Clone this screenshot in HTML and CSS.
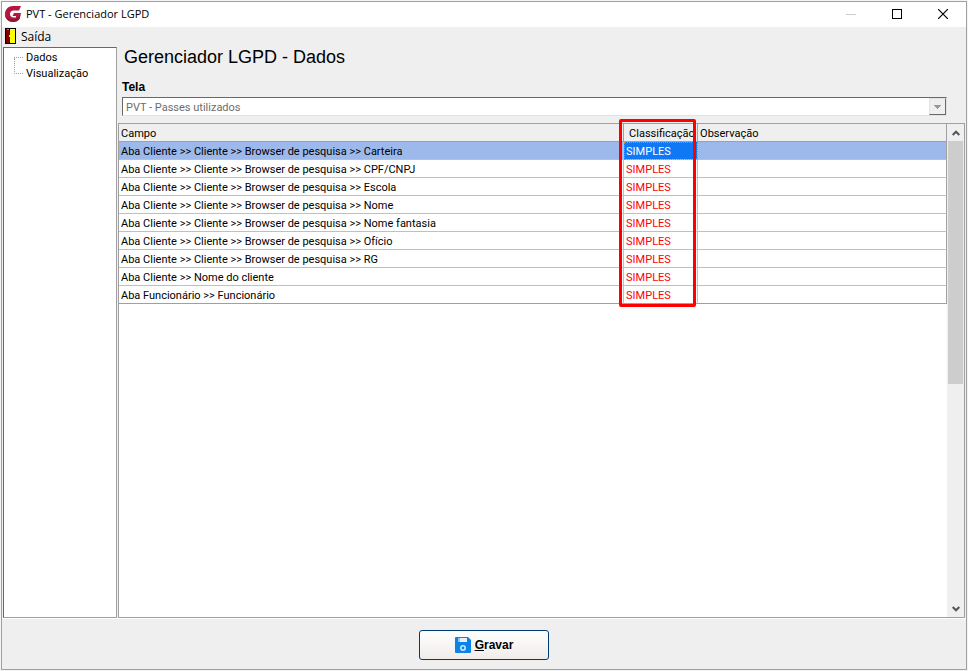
FILE: index.html
```html
<!DOCTYPE html>
<html lang="pt-BR">
	<head>
		<meta charset="UTF-8">
		<title>PVT - Gerenciador LGPD</title>
		<link rel="stylesheet" href="styles.css">
	</head>
	<body>
		<div class="window">
			<header class="titlebar">
				<svg class="logo" width="16" height="16" viewBox="0 0 16 16">
					<path d="M16 0L14 4.500H8.500C6.500 4.500 5 6 5 8S6.500 11.500 8.500 11.500H11V10H7.500L9 7H16L14.500 13C13 15 11 16 8 16C3.500 16 0 12.500 0 8S3.500 0 8 0Z" fill="#b5173f"/>
					<path d="M0 9C.5 13 4 16 8 16C11 16 13 15 14.500 13L15.500 9C12 14 4 15 0 9Z" fill="#8a1a3c"/>
				</svg>
				<span class="title">PVT - Gerenciador LGPD</span>
				<div class="controls">
					<button type="button" aria-label="Minimizar" disabled>
						<svg width="10" height="10" viewBox="0 0 10 10" shape-rendering="crispEdges"><path d="M0 5.500H10" stroke="#ccc"/></svg>
					</button>
					<button type="button" aria-label="Maximizar">
						<svg width="10" height="10" viewBox="0 0 10 10" shape-rendering="crispEdges"><path d="M.5 .5H9.500V9.500H.5Z" fill="none" stroke="#000"/></svg>
					</button>
					<button type="button" aria-label="Fechar">
						<svg width="10" height="10" viewBox="0 0 10 10"><path d="M0 0L10 10M10 0L0 10" stroke="#000" stroke-width="1.200"/></svg>
					</button>
				</div>
			</header>

			<nav class="menubar">
				<button type="button" class="menu-item">
					<svg width="11" height="16" viewBox="0 0 11 16" shape-rendering="crispEdges">
						<path d="M0 0H11V16H0Z" fill="#000"/>
						<path d="M5 1H10V15H5Z" fill="#ff0"/>
						<path d="M1 1L5 3V13L3 15H1Z" fill="#800000"/>
						<path d="M2 1H4V2H2Z" fill="#0cc"/>
						<path d="M4 7H5V9H4Z" fill="#ff0"/>
					</svg>
					Saída
				</button>
			</nav>

			<div class="content">
				<aside class="tree">
					<ul>
						<li><a href="#dados">Dados</a></li>
						<li><a href="#visualizacao">Visualização</a></li>
					</ul>
				</aside>

				<main class="main" id="dados">
					<h1>Gerenciador LGPD - Dados</h1>
					<div class="field">
						<label for="tela">Tela</label>
						<div class="combo">
							<select id="tela" disabled>
								<option>PVT - Passes utilizados</option>
							</select>
							<span class="combo-arrow">
								<svg width="7" height="4" viewBox="0 0 7 4" shape-rendering="crispEdges"><path d="M0 0H7L3.500 4Z" fill="#999"/></svg>
							</span>
						</div>
					</div>

					<div class="grid">
						<div class="grid-body">
							<table>
								<thead>
									<tr>
										<th class="col-campo">Campo</th>
										<th class="col-class">Classificação<span class="highlight"></span></th>
										<th>Observação</th>
									</tr>
								</thead>
								<tbody>
									<tr class="selected"><td>Aba Cliente &gt;&gt; Cliente &gt;&gt; Browser de pesquisa &gt;&gt; Carteira</td><td class="class focus">SIMPLES</td><td></td></tr>
									<tr><td>Aba Cliente &gt;&gt; Cliente &gt;&gt; Browser de pesquisa &gt;&gt; CPF/CNPJ</td><td class="class">SIMPLES</td><td></td></tr>
									<tr><td>Aba Cliente &gt;&gt; Cliente &gt;&gt; Browser de pesquisa &gt;&gt; Escola</td><td class="class">SIMPLES</td><td></td></tr>
									<tr><td>Aba Cliente &gt;&gt; Cliente &gt;&gt; Browser de pesquisa &gt;&gt; Nome</td><td class="class">SIMPLES</td><td></td></tr>
									<tr><td>Aba Cliente &gt;&gt; Cliente &gt;&gt; Browser de pesquisa &gt;&gt; Nome fantasia</td><td class="class">SIMPLES</td><td></td></tr>
									<tr><td>Aba Cliente &gt;&gt; Cliente &gt;&gt; Browser de pesquisa &gt;&gt; Ofício</td><td class="class">SIMPLES</td><td></td></tr>
									<tr><td>Aba Cliente &gt;&gt; Cliente &gt;&gt; Browser de pesquisa &gt;&gt; RG</td><td class="class">SIMPLES</td><td></td></tr>
									<tr><td>Aba Cliente &gt;&gt; Nome do cliente</td><td class="class">SIMPLES</td><td></td></tr>
									<tr><td>Aba Funcionário &gt;&gt; Funcionário</td><td class="class">SIMPLES</td><td></td></tr>
								</tbody>
							</table>
						</div>
						<div class="scrollbar">
							<button type="button" aria-label="Rolar para cima">
								<svg width="8" height="6" viewBox="0 0 8 6"><path d="M.7 5L4 1.700L7.300 5" fill="none" stroke="#555" stroke-width="2"/></svg>
							</button>
							<div class="track"><div class="thumb"></div></div>
							<button type="button" aria-label="Rolar para baixo">
								<svg width="8" height="6" viewBox="0 0 8 6"><path d="M.7 1L4 4.300L7.300 1" fill="none" stroke="#555" stroke-width="2"/></svg>
							</button>
						</div>
					</div>
				</main>
			</div>

			<footer class="footer">
				<button type="button" class="save">
					<svg width="16" height="16" viewBox="0 0 16 16">
						<path d="M0 1Q0 0 1 0H13L16 3V15Q16 16 15 16H1Q0 16 0 15Z" fill="#0a84e8"/>
						<path d="M3 1H12V5H3Z" fill="#e4f1fc"/>
						<path d="M3 1H5V5H3Z" fill="#8cc4f4"/>
						<circle cx="8" cy="11" r="2.200" fill="none" stroke="#d5eafc" stroke-width="1.500"/>
					</svg>
					<span><u>G</u>ravar</span>
				</button>
			</footer>
		</div>
	</body>
</html>
```

FILE: styles.css
```css
* {
	box-sizing: border-box;
	margin: 0;
	padding: 0;
}
body {
	background: #f4f4f4;
	padding: 1px;
	font-family: Roboto, "Liberation Sans", Arial, sans-serif;
	font-size: 11px;
	color: #000;
}
button {
	border: 0;
	background: none;
	font: inherit;
	color: inherit;
}
svg {
	display: block;
}
.window {
	display: flex;
	flex-direction: column;
	height: calc(100vh - 2px);
	border: 1px solid #a0a0a0;
	background: #efefef;
}

/* title bar */
.titlebar {
	display: flex;
	align-items: center;
	height: 25px;
	padding-left: 3px;
	gap: 5px;
	background: #fff;
	font-family: "Open Sans", "Noto Sans", sans-serif;
	font-size: 11px;
}
.title {
	line-height: 16px;
	padding-bottom: 2px;
}
.logo {
	margin-bottom: 2px;
}
.controls {
	display: flex;
	margin-left: auto;
	height: 100%;
}
.controls button {
	display: flex;
	align-items: center;
	justify-content: center;
	width: 46px;
	padding-bottom: 1px;
}

/* menu */
.menubar {
	height: 20px;
	padding-left: 3px;
	font-family: "Open Sans", "Noto Sans", sans-serif;
	font-size: 12px;
}
.menu-item {
	display: flex;
	align-items: center;
	gap: 5px;
	height: 18px;
}

.content {
	display: flex;
	flex: 1;
	min-height: 0;
	padding: 0 1px;
	gap: 1px;
}
.tree {
	width: 114px;
	border: 1px solid #a0a0a0;
	border-top-color: #696969;
	border-left-color: #696969;
	background: #fff;
	padding: 2px 0 0 10px;
}
.tree ul {
	list-style: none;
}
.tree li {
	position: relative;
	height: 16px;
	line-height: 16px;
	padding-left: 12px;
}
.tree li:before {
	content: '';
	position: absolute;
	left: 0;
	top: 7px;
	width: 9px;
	border-top: 1px dotted #a0a0a0;
}
.tree li + li:after {
	content: '';
	position: absolute;
	left: 0;
	bottom: 8px;
	height: 16px;
	border-left: 1px dotted #a0a0a0;
}
.tree a {
	color: #000;
	text-decoration: none;
}

/* main area */
.main {
	display: flex;
	flex-direction: column;
	flex: 1;
	min-width: 0;
}
h1 {
	padding-left: 6px;
	font-family: "Liberation Sans", Arial, sans-serif;
	font-size: 18px;
	font-weight: normal;
	line-height: 20px;
}
.field {
	padding: 12px 18px 7px 4px;
}
.field label {
	display: block;
	height: 18px;
	line-height: 16px;
	font-family: "Liberation Sans", Arial, sans-serif;
	font-size: 12px;
	font-weight: bold;
}
.combo {
	display: flex;
	height: 19px;
	border: 1px solid;
	border-color: #696969 #e3e3e3 #e3e3e3 #696969;
	background: #fff;
}
.combo select {
	flex: 1;
	appearance: none;
	border: 0;
	padding: 2px 0 0 3px;
	background: #fff;
	font: inherit;
	color: #6d6d6d;
	opacity: 1;
}
.combo-arrow {
	display: flex;
	align-items: center;
	justify-content: center;
	width: 17px;
	border: 1px solid;
	border-color: #e3e3e3 #696969 #696969 #e3e3e3;
	background: #efefef;
}

/* grid */
.grid {
	display: flex;
	flex: 1;
	border: 1px solid #a0a0a0;
	background: #fff;
}
.grid-body {
	flex: 1;
}
table {
	width: 100%;
	table-layout: fixed;
	border-collapse: separate;
	border-spacing: 0;
}
th,
td {
	height: 18px;
	padding: 2px 2px 0;
	border-right: 1px solid #c0c0c0;
	border-bottom: 1px solid #c0c0c0;
	line-height: 15px;
	text-align: left;
	font-weight: normal;
	white-space: nowrap;
}
th {
	background: #efefef;
	border-color: #a0a0a0;
}
th:last-child,
td:last-child {
	border-right-color: #a0a0a0;
}
tr:last-child td {
	border-bottom-color: #a0a0a0;
}
.col-campo {
	width: 61%;
}
.col-class {
	position: relative;
	width: 74px;
	padding-left: 5px;
}
.selected td {
	background: #9db8ea;
}
.class {
	color: #f00;
}
.selected .focus {
	background: #0f78f5;
	color: #fff;
	outline: 1px dotted #d08a30;
	outline-offset: -1px;
}
/* frame round the whole classification column: header + 9 rows */
.highlight {
	position: absolute;
	top: -5px;
	left: -5px;
	right: 1px;
	height: 188px;
	border: 3px solid #f00;
	border-radius: 2px;
}
.scrollbar {
	display: flex;
	flex-direction: column;
	width: 17px;
	padding: 0 1px;
	background: #efefef;
}
.scrollbar button {
	display: flex;
	align-items: center;
	justify-content: center;
	height: 17px;
}
.track {
	flex: 1;
}
.thumb {
	height: 53%;
	background: #cdcdcd;
}

.footer {
	display: flex;
	justify-content: center;
	padding: 11px 0 9px;
	border-top: 1px solid #fff;
}
.save {
	display: flex;
	align-items: center;
	justify-content: center;
	gap: 4px;
	width: 130px;
	height: 30px;
	border: 1px solid #003c74;
	border-radius: 3px;
	background: linear-gradient(#fff, #f0ecea);
	font-family: "Liberation Sans", Arial, sans-serif;
	font-size: 12px;
	font-weight: bold;
}
```
